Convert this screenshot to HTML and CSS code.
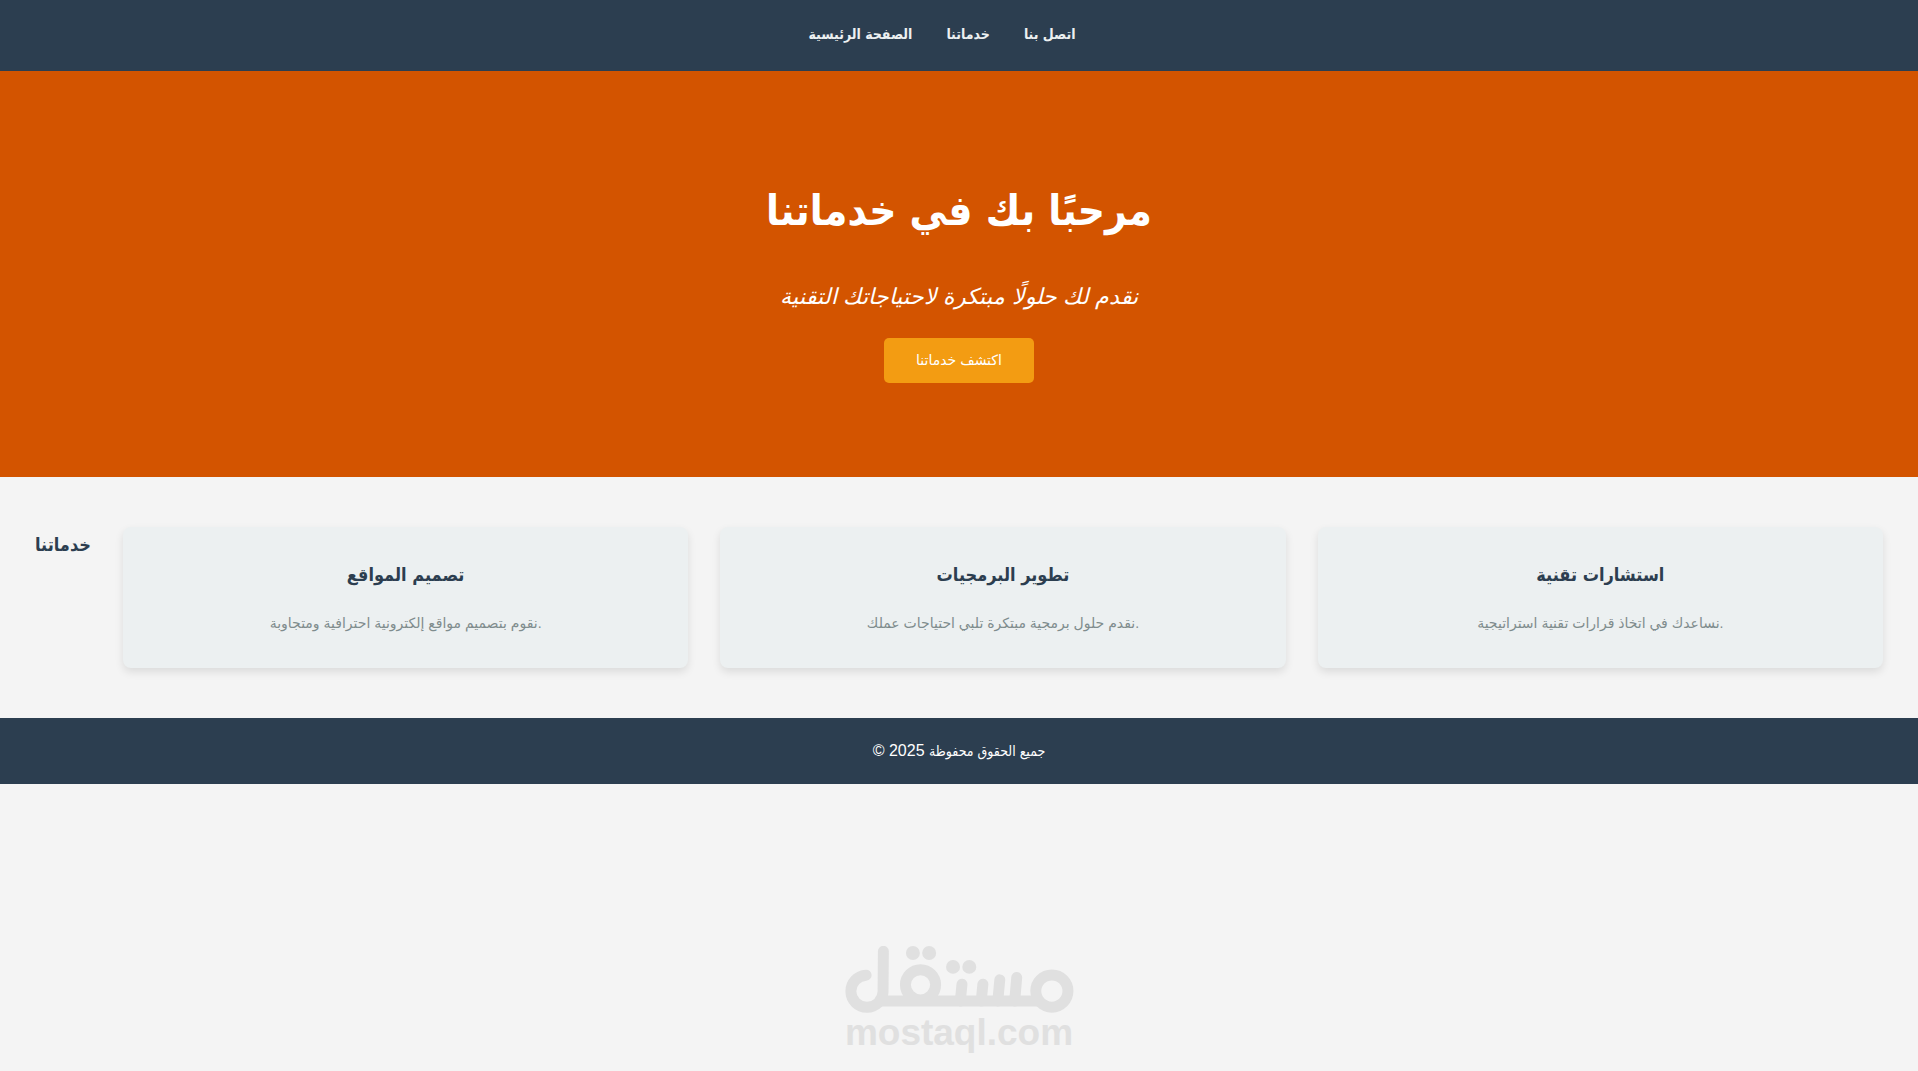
FILE: index.html
```html
<!DOCTYPE html>
<html lang="ar" dir="ltr">
<head>
    <meta charset="UTF-8">
    <meta name="viewport" content="width=device-width, initial-scale=1.0">
    <title>خدماتنا</title>
    <link rel="stylesheet" href="styles.css">
</head>
<body>
    <header>
        <nav>
            <ul class="menu">
                <li><a href="#home">الصفحة الرئيسية</a></li>
                <li><a href="#services">خدماتنا</a></li>
                <li><a href="#contact">اتصل بنا</a></li>
            </ul>
        </nav>
    </header>

    <section class="hero" id="home">
        <h1>مرحبًا بك في خدماتنا</h1>
        <p>نقدم لك حلولًا مبتكرة لاحتياجاتك التقنية</p>
        <button type="button">اكتشف خدماتنا</button>
    </section>

    <section class="services" id="services">
        <h2>خدماتنا</h2>
        <div class="service">
            <h3>تصميم المواقع</h3>
            <p>نقوم بتصميم مواقع إلكترونية احترافية ومتجاوبة.</p>
        </div>
        <div class="service">
            <h3>تطوير البرمجيات</h3>
            <p>نقدم حلول برمجية مبتكرة تلبي احتياجات عملك.</p>
        </div>
        <div class="service">
            <h3>استشارات تقنية</h3>
            <p>نساعدك في اتخاذ قرارات تقنية استراتيجية.</p>
        </div>
    </section>

    <footer id="contact">
        <p>© 2025 <span>جميع الحقوق محفوظة</span></p>
    </footer>

    <div class="watermark">
        <svg viewBox="72 72 690 202" width="230" height="67" role="img" aria-label="مستقل">
            <g fill="none" stroke="#e0e0e0" stroke-width="33" stroke-linecap="round">
                <path d="M137 160A48.500 48.500 0 1 0 188 210L189 88"/>
                <path d="M174 238H662" stroke-linecap="butt"/>
                <circle cx="301" cy="189" r="45.500"/>
                <circle cx="697" cy="208" r="48.500"/>
                <path d="M426 187L421 238M489 187L484 238M540 174L534 238M591 167L585 238"/>
            </g>
            <g fill="#e0e0e0">
                <circle cx="278" cy="93" r="21"/>
                <circle cx="327" cy="93" r="21"/>
                <circle cx="399" cy="135" r="21"/>
                <circle cx="448" cy="135" r="21"/>
            </g>
        </svg>
        <span>mostaql.com</span>
    </div>
</body>
</html>
```

FILE: styles.css
```css
* {
    box-sizing: border-box;
    margin: 0;
    padding: 0;
}
body {
    font-family: "Liberation Sans", Arial, "DejaVu Sans", sans-serif;
    background-color: #f4f4f4;
    color: #333;
    display: flex;
    flex-direction: column;
    min-height: 100vh;
}
h1, h2, h3, .menu, footer span {
    font-family: "DejaVu Sans Condensed", "DejaVu Sans", sans-serif;
}
header {
    background-color: #2c3e50;
    padding: 22px 0 25px;
}
.menu {
    display: flex;
    justify-content: center;
    list-style: none;
    line-height: 24px;
}
.menu li {
    margin-right: 34px;
}
.menu a {
    color: #ecf0f1;
    font-size: 14px;
    font-weight: bold;
    text-decoration: none;
}
.hero {
    background-color: #d35400;
    color: white;
    text-align: center;
    padding: 100px 20px 94px;
}
.hero h1 {
    font-size: 42px;
    line-height: 80px;
    margin-bottom: 26px;
}
.hero p {
    font-size: 22px;
    font-style: italic;
    line-height: 40px;
    margin-bottom: 21px;
}
.hero button {
    display: block;
    margin: 0 auto;
    background-color: #f39c12;
    color: white;
    font-family: inherit;
    font-size: 14px;
    line-height: 21px;
    padding: 12px 32px;
    border: none;
    border-radius: 5px;
    cursor: pointer;
}
.services {
    display: flex;
    gap: 32px;
    padding: 50px 35px;
}
.services h2 {
    color: #2c3e50;
    font-size: 18px;
    line-height: 36px;
}
.service {
    flex: 1;
    background-color: #ecf0f1;
    border-radius: 8px;
    box-shadow: 0 4px 8px rgba(0, 0, 0, 0.1);
    padding: 32px 20px;
    text-align: center;
}
.service h3 {
    color: #2c3e50;
    font-size: 18px;
    line-height: 32px;
    margin-bottom: 20px;
}
.service p {
    color: #7f8c8d;
    font-size: 14px;
    line-height: 25px;
}
footer {
    background-color: #2c3e50;
    color: white;
    text-align: center;
    padding: 20px 0;
}
footer p {
    font-size: 16px;
    line-height: 26px;
}
footer span {
    font-size: 14px;
}
.watermark {
    display: flex;
    flex-direction: column;
    align-items: center;
    margin-top: auto;
    padding-bottom: 18px;
    color: #e0e0e0;
    font-size: 37px;
    font-weight: bold;
    line-height: 40px;
}
```
